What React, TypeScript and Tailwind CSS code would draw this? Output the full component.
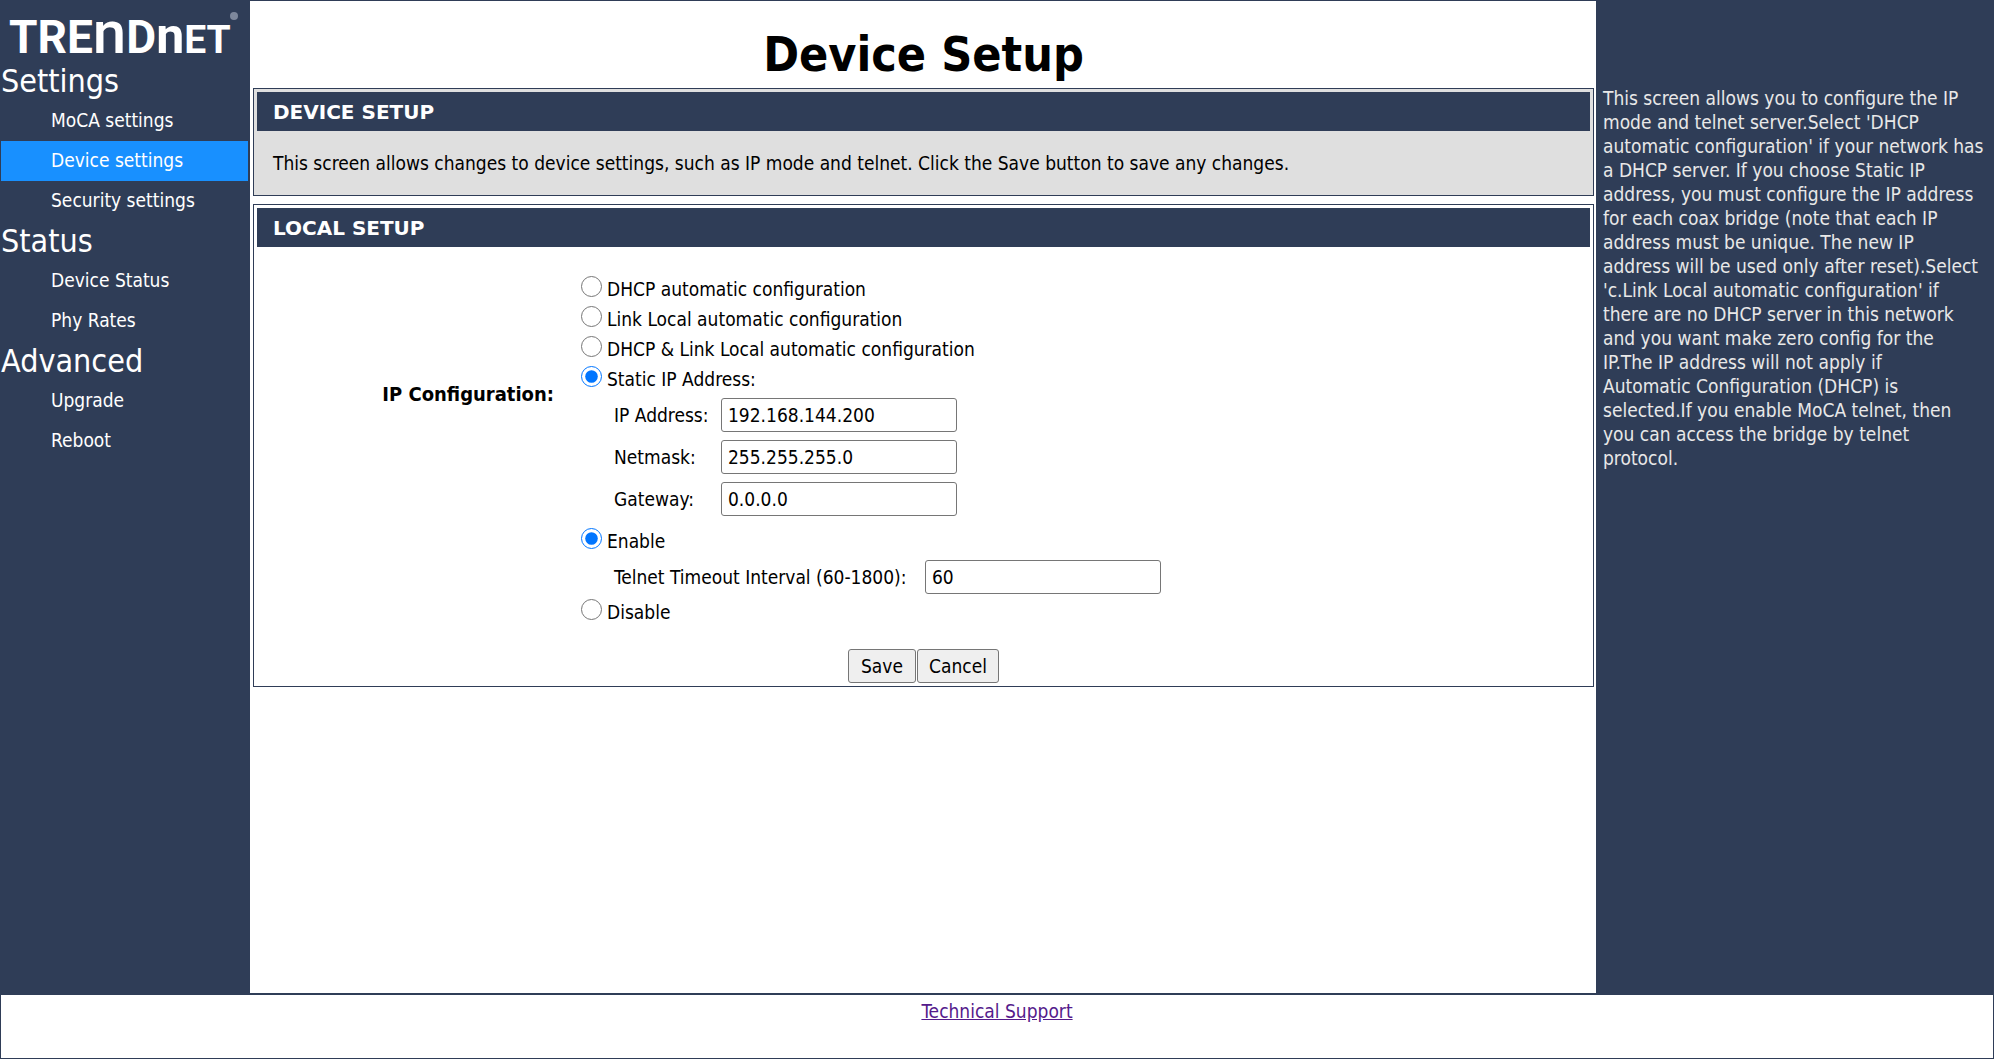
import React, { useState } from 'react';

const menu = [
    { title: 'Settings', items: ['MoCA settings', 'Device settings', 'Security settings'] },
    { title: 'Status', items: ['Device Status', 'Phy Rates'] },
    { title: 'Advanced', items: ['Upgrade', 'Reboot'] },
];

const ipModes = [
    { value: 'dhcp', label: 'DHCP automatic configuration' },
    { value: 'link', label: 'Link Local automatic configuration' },
    { value: 'both', label: 'DHCP & Link Local automatic configuration' },
    { value: 'static', label: 'Static IP Address:' },
];

const addressFields = [
    { id: 'ip', label: 'IP Address:', value: '192.168.144.200' },
    { id: 'netmask', label: 'Netmask:', value: '255.255.255.0' },
    { id: 'gateway', label: 'Gateway:', value: '0.0.0.0' },
];

const helpText = `This screen allows you to configure the IP
mode and telnet server.Select 'DHCP
automatic configuration' if your network has
a DHCP server. If you choose Static IP
address, you must configure the IP address
for each coax bridge (note that each IP
address must be unique. The new IP
address will be used only after reset).Select
'c.Link Local automatic configuration' if
there are no DHCP server in this network
and you want make zero config for the
IP.The IP address will not apply if
Automatic Configuration (DHCP) is
selected.If you enable MoCA telnet, then
you can access the bridge by telnet
protocol.`;

// the wordmark mixes cap heights, the n's are arches
const Logo = () => (
    <svg width="250" height="60" viewBox="0 0 250 60" fill="#ffffff" className="block overflow-visible">
        <text x="9" y="52" fontFamily="Roboto, sans-serif" fontWeight="700" fontSize="46">
            TRE<tspan fontSize="60" fontWeight="500">n</tspan>D<tspan fontSize="50">n</tspan>
            <tspan fontSize="39">ET</tspan>
        </text>
        <circle cx="234" cy="15" r="4" fill="#7d879b" />
    </svg>
);

const Sidebar = () => (
    <nav className="w-[250px] shrink-0 bg-[#2f3d57] text-white">
        <Logo />
        {menu.map((group) => (
            <div key={group.title}>
                <h2 className="h-10 px-px text-[32px] leading-10">{group.title}</h2>
                <ul>
                    {group.items.map((item) => (
                        <li key={item} className="pl-px pr-0.5">
                            <a
                                href="#"
                                className={`block h-10 pl-[50px] leading-[38px] ${item === 'Device settings' ? 'bg-[#1890ff]' : ''}`}
                            >
                                {item}
                            </a>
                        </li>
                    ))}
                </ul>
            </div>
        ))}
    </nav>
);

const PanelTitle = ({ children }: any) => (
    <h2 className="h-[39px] bg-[#2f3d57] px-4 font-['DejaVu_Sans'] text-[20px] font-bold leading-10 text-white">
        {children}
    </h2>
);

const Radio = ({ name, label, checked, onChange }: any) => (
    <label className="flex h-[30px] items-center gap-[5px]">
        <input type="radio" name={name} checked={checked} onChange={onChange} className="mb-1.5 size-[21px]" />
        <span>{label}</span>
    </label>
);

const TextBox = ({ id, value }: any) => (
    <input
        id={id}
        type="text"
        defaultValue={value}
        className="h-[34px] w-[236px] rounded-[3px] border border-[#767676] bg-white px-1.5"
    />
);

const App = () => {
    const [mode, setMode] = useState('static');
    const [telnet, setTelnet] = useState(true);

    return (
        <div className="flex min-h-screen flex-col border-t border-[#2f3d57] bg-white font-['DejaVu_Sans_Condensed','DejaVu_Sans',sans-serif] text-[19px] leading-6 text-black">
            <div className="flex flex-1">
                <Sidebar />

                <main className="min-w-0 flex-1 pl-[3px] pr-0.5">
                    <h1 className="h-[87px] pt-5 text-center text-[48px] font-bold leading-[66px]">Device Setup</h1>

                    <section className="border border-[#2f3d57] bg-[#dfdfdf] p-[3px]">
                        <PanelTitle>DEVICE SETUP</PanelTitle>
                        <p className="px-4 pb-[17px] pt-5">
                            This screen allows changes to device settings, such as IP mode and telnet. Click the Save button to
                            save any changes.
                        </p>
                    </section>

                    <section className="mt-2 border border-[#2f3d57] p-[3px]">
                        <PanelTitle>LOCAL SETUP</PanelTitle>
                        <form onSubmit={(e) => e.preventDefault()}>
                            <div className="flex items-center pt-[27px]">
                                <div className="w-[297px] shrink-0 pb-[114px] text-right text-[20px] font-bold">IP Configuration:</div>
                                <div className="pl-[27px]">
                                    {ipModes.map((m) => (
                                        <Radio
                                            key={m.value}
                                            name="mode"
                                            label={m.label}
                                            checked={mode === m.value}
                                            onChange={() => setMode(m.value)}
                                        />
                                    ))}
                                    <div className="flex flex-col gap-2 pb-2.5 pl-[33px] pt-1">
                                        {addressFields.map((f) => (
                                            <div key={f.id} className="flex items-center">
                                                <label htmlFor={f.id} className="w-[107px]">{f.label}</label>
                                                <TextBox id={f.id} value={f.value} />
                                            </div>
                                        ))}
                                    </div>
                                    <Radio name="telnet" label="Enable" checked={telnet} onChange={() => setTelnet(true)} />
                                    <div className="flex items-center pb-[3px] pl-[33px] pt-1">
                                        <label htmlFor="timeout" className="w-[311px]">Telnet Timeout Interval (60-1800):</label>
                                        <TextBox id="timeout" value="60" />
                                    </div>
                                    <Radio name="telnet" label="Disable" checked={!telnet} onChange={() => setTelnet(false)} />
                                </div>
                            </div>
                            <div className="flex justify-center gap-px pt-[22px]">
                                <button type="submit" className="h-[34px] w-[68px] rounded-[3px] border border-[#767676] bg-[#efefef]">
                                    Save
                                </button>
                                <button type="reset" className="h-[34px] w-[82px] rounded-[3px] border border-[#767676] bg-[#efefef]">
                                    Cancel
                                </button>
                            </div>
                        </form>
                    </section>
                </main>

                <aside className="w-[398px] shrink-0 whitespace-pre-line bg-[#2f3d57] pl-[7px] pt-[85px] text-[#e8e8e8]">{helpText}</aside>
            </div>

            <footer className="h-[66px] border border-t-2 border-[#2f3d57] pt-1 text-center">
                <a href="#" className="text-[#551a8b] underline">Technical Support</a>
            </footer>
        </div>
    );
};

export default App;
